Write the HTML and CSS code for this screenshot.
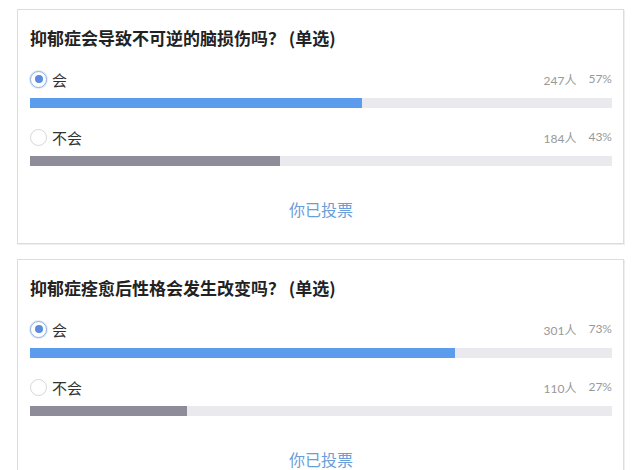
FILE: index.html
```html
<!DOCTYPE html>
<html lang="zh-CN">
<head>
<meta charset="utf-8">
<link rel="stylesheet" href="styles.css">
</head>
<body>
<div class="page">
  <section class="card">
    <h2 class="title">抑郁症会导致不可逆的脑损伤吗？ (单选)</h2>
    <div class="option">
      <div class="row">
        <span class="radio checked"></span>
        <span class="label">会</span>
        <span class="stats"><span class="count">247人</span><span class="pct">57%</span></span>
      </div>
      <div class="track"><div class="fill blue" style="width:57%"></div></div>
    </div>
    <div class="option">
      <div class="row">
        <span class="radio"></span>
        <span class="label">不会</span>
        <span class="stats"><span class="count">184人</span><span class="pct">43%</span></span>
      </div>
      <div class="track"><div class="fill gray" style="width:43%"></div></div>
    </div>
    <div class="voted">你已投票</div>
  </section>
  <section class="card">
    <h2 class="title">抑郁症痊愈后性格会发生改变吗？ (单选)</h2>
    <div class="option">
      <div class="row">
        <span class="radio checked"></span>
        <span class="label">会</span>
        <span class="stats"><span class="count">301人</span><span class="pct">73%</span></span>
      </div>
      <div class="track"><div class="fill blue" style="width:73%"></div></div>
    </div>
    <div class="option">
      <div class="row">
        <span class="radio"></span>
        <span class="label">不会</span>
        <span class="stats"><span class="count">110人</span><span class="pct">27%</span></span>
      </div>
      <div class="track"><div class="fill gray" style="width:27%"></div></div>
    </div>
    <div class="voted">你已投票</div>
  </section>
</div>
</body>
</html>
```

FILE: styles.css
```css
* { box-sizing: border-box; }
html, body { margin: 0; padding: 0; background: #fff; }
body {
  font-family: "Noto Sans CJK SC", "Noto Sans", sans-serif;
  color: #333;
  overflow: hidden;
}
.page {
  padding: 9px 0 0 17px;
  display: flex;
  flex-direction: column;
  gap: 15px;
  width: 624px;
}
.card {
  border: 1px solid #dcdcdc;
  box-shadow: 1px 1px 0 #eee;
  padding: 16px 11px 22px 12px;
  display: flex;
  flex-direction: column;
}
.title {
  margin: 0;
  font-size: 17px;
  line-height: 24px;
  font-weight: bold;
  color: #222;
}
.option {
  margin-top: 19px;
  display: flex;
  flex-direction: column;
  gap: 9px;
}
.row {
  display: flex;
  align-items: center;
  height: 20px;
}
.radio {
  width: 17px;
  height: 17px;
  border-radius: 50%;
  border: 1px solid #d6d6d6;
  background: #fff;
  flex: none;
  position: relative;
}
.radio.checked {
  border: 1px solid #8fb2e6;
  box-shadow: 0 0 0 1px #e4e9f1;
}
.radio.checked::after {
  content: "";
  position: absolute;
  left: 3.5px;
  top: 3.5px;
  width: 8px;
  height: 8px;
  border-radius: 50%;
  background: #5a8bdc;
}
.label {
  margin-left: 5px;
  font-size: 15px;
  color: #333;
}
.stats {
  margin-left: auto;
  display: flex;
  gap: 12px;
  font-family: "Lato", "Noto Sans CJK SC", sans-serif;
  font-size: 12px;
  color: #999;
}
.track {
  height: 10px;
  background: #eaeaee;
}
.fill { height: 100%; }
.fill.blue { background: #5b9cec; }
.fill.gray { background: #8d8c98; }
.voted {
  margin-top: 31px;
  text-align: center;
  font-size: 16px;
  line-height: 24px;
  color: #6a9edb;
}
```
